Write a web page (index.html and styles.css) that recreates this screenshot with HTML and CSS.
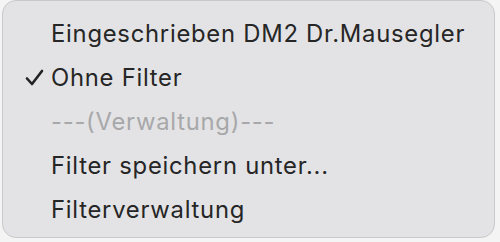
FILE: index.html
```html
<!DOCTYPE html>
<html lang="de">
<head>
    <meta charset="UTF-8">
    <title>Filter</title>
    <link rel="stylesheet" href="styles.css">
</head>
<body>
    <div class="menu">
        <div class="item">Eingeschrieben DM2 Dr.Mausegler</div>
        <div class="item checked">
            <svg class="check" width="19" height="17" viewBox="0 0 19 17"><path d="M2 9.5 L7 15 L17 2" fill="none" stroke="#222" stroke-width="2.6" stroke-linecap="round" stroke-linejoin="round"/></svg>
            Ohne Filter
        </div>
        <div class="item disabled">---(Verwaltung)---</div>
        <div class="item">Filter speichern unter...</div>
        <div class="item">Filterverwaltung</div>
    </div>
</body>
</html>
```

FILE: styles.css
```css
body {
    margin: 0;
    width: 500px;
    height: 242px;
    background-color: #f4f4f4;
    font-family: Inter, "Liberation Sans", sans-serif;
    overflow: hidden;
}
.menu {
    margin: 0 5px 0 2px;
    height: 238px;
    background-color: #e3e3e5;
    border-radius: 14px;
    border: 1px solid #c9c9cb;
    box-sizing: border-box;
    padding: 11px 0 0 0;
}
.item {
    position: relative;
    height: 44px;
    line-height: 44px;
    padding-left: 48px;
    font-size: 23.8px;
    letter-spacing: 0.75px;
    color: #262626;
    white-space: nowrap;
}
.disabled {
    color: #a8a8aa;
}
.check {
    position: absolute;
    left: 22px;
    top: 13px;
}
```
